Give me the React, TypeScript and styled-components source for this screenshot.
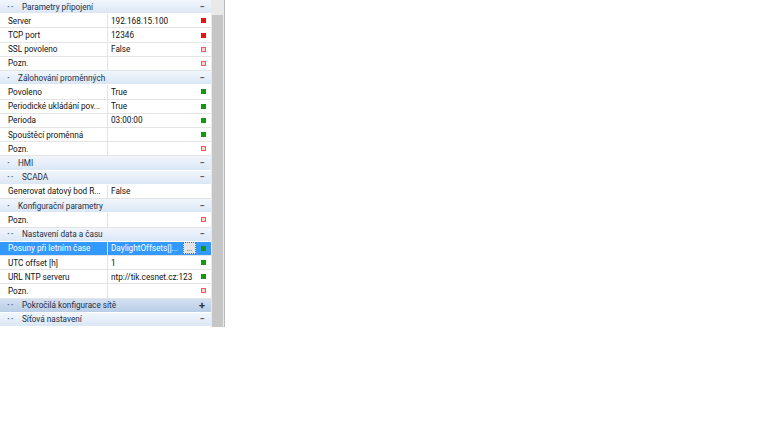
import React from 'react'
import styled, { createGlobalStyle } from 'styled-components'

const GlobalStyle = createGlobalStyle`
  html, body {
    margin: 0;
    padding: 0;
    background: #ffffff;
  }
  body {
    font-family: Roboto, "Liberation Sans", Arial, sans-serif;
    font-size: 8.2px;
    color: #111111;
  }
`

const Panel = styled.div`
  width: 225px;
  height: 327px;
  display: flex;
  border-right: 1px solid #b9b9b9;
  box-sizing: border-box;
  overflow: hidden;
`

const Grid = styled.div`
  flex: 1;
  display: flex;
  flex-direction: column;
  min-width: 0;
`

const Scrollbar = styled.div`
  width: 13px;
  background: #e9e9e9;
  display: flex;
  flex-direction: column;
  padding: 15px 1px 0;
  box-sizing: border-box;
`

const Thumb = styled.div`
  flex: 1;
  background: #c6c6c6;
`

const CategoryRow = styled.div<{ $dark?: boolean }>`
  height: 14.25px;
  display: flex;
  align-items: center;
  background: ${p =>
    p.$dark
      ? 'linear-gradient(#d3e0f1, #b9cde7)'
      : 'linear-gradient(#f1f6fc, #dbe7f6)'};
  color: #1e2f46;
  border-bottom: 1px solid #ffffff;
  box-sizing: border-box;
  padding-left: 7px;
`

const Dots = styled.span<{ $level: number }>`
  width: ${p => (p.$level === 2 ? 15 : 11)}px;
  color: #5f6f86;
  font-size: 9px;
  font-weight: bold;
  letter-spacing: 1px;
  flex-shrink: 0;
`

const CategoryName = styled.span`
  flex: 1;
  white-space: nowrap;
`

const Toggle = styled.span<{ $plus?: boolean }>`
  width: 14px;
  text-align: center;
  color: ${p => (p.$plus ? '#333' : '#555')};
  font-size: ${p => (p.$plus ? 11 : 9)}px;
  font-weight: bold;
  margin-right: 2px;
`

const Row = styled.div<{ $selected?: boolean }>`
  height: 14.25px;
  display: flex;
  align-items: stretch;
  background: ${p => (p.$selected ? '#3399ff' : '#ffffff')};
  color: ${p => (p.$selected ? '#ffffff' : '#111111')};
  border-bottom: 1px solid #e4e4e4;
  box-sizing: border-box;
`

const NameCell = styled.div`
  width: 108px;
  padding-left: 8px;
  box-sizing: border-box;
  border-right: 1px solid #e4e4e4;
  display: flex;
  align-items: center;
  white-space: nowrap;
  overflow: hidden;
`

const ValueCell = styled.div`
  flex: 1;
  padding-left: 3px;
  display: flex;
  align-items: center;
  white-space: nowrap;
  overflow: hidden;
  min-width: 0;
`

const ValueText = styled.span`
  flex: 1;
  overflow: hidden;
`

const EllipsisButton = styled.span`
  width: 13px;
  height: 12px;
  margin: 0 2px 0 4px;
  flex-shrink: 0;
  background: #e4e4e4;
  border: 1px dotted #6e6e6e;
  box-sizing: border-box;
  color: #333;
  font-size: 7px;
  line-height: 12px;
  text-align: center;
`

const Marker = styled.span<{ $kind: 'red' | 'pink' | 'green' }>`
  width: 5px;
  height: 5px;
  margin: 0 5px 0 3px;
  flex-shrink: 0;
  box-sizing: border-box;
  background: ${p =>
    p.$kind === 'red' ? '#ee1111' : p.$kind === 'green' ? '#119911' : '#fbd0d0'};
  border: ${p => (p.$kind === 'pink' ? '1px solid #ef5a5a' : 'none')};
`

type Item =
  | { type: 'cat'; name: string; level: number; open?: boolean; dark?: boolean }
  | { type: 'prop'; name: string; value?: string; marker?: 'red' | 'pink' | 'green'; selected?: boolean; button?: boolean }

const items: Item[] = [
  { type: 'cat', name: 'Parametry připojení', level: 2 },
  { type: 'prop', name: 'Server', value: '192.168.15.100', marker: 'red' },
  { type: 'prop', name: 'TCP port', value: '12346', marker: 'red' },
  { type: 'prop', name: 'SSL povoleno', value: 'False', marker: 'pink' },
  { type: 'prop', name: 'Pozn.', marker: 'pink' },
  { type: 'cat', name: 'Zálohování proměnných', level: 1 },
  { type: 'prop', name: 'Povoleno', value: 'True', marker: 'green' },
  { type: 'prop', name: 'Periodické ukládání pov...', value: 'True', marker: 'green' },
  { type: 'prop', name: 'Perioda', value: '03:00:00', marker: 'green' },
  { type: 'prop', name: 'Spouštěcí proměnná', marker: 'green' },
  { type: 'prop', name: 'Pozn.', marker: 'pink' },
  { type: 'cat', name: 'HMI', level: 1 },
  { type: 'cat', name: 'SCADA', level: 2 },
  { type: 'prop', name: 'Generovat datový bod R...', value: 'False' },
  { type: 'cat', name: 'Konfigurační parametry', level: 1 },
  { type: 'prop', name: 'Pozn.', marker: 'pink' },
  { type: 'cat', name: 'Nastavení data a času', level: 2 },
  { type: 'prop', name: 'Posuny při letním čase', value: 'DaylightOffsets[]...', marker: 'green', selected: true, button: true },
  { type: 'prop', name: 'UTC offset [h]', value: '1', marker: 'green' },
  { type: 'prop', name: 'URL NTP serveru', value: 'ntp://tik.cesnet.cz:123', marker: 'green' },
  { type: 'prop', name: 'Pozn.', marker: 'pink' },
  { type: 'cat', name: 'Pokročilá konfigurace sítě', level: 2, open: false, dark: true },
  { type: 'cat', name: 'Síťová nastavení', level: 2 },
]

const App = () => (
  <>
    <GlobalStyle />
    <Panel>
      <Grid>
        {items.map((it, i) =>
          it.type === 'cat' ? (
            <CategoryRow key={i} $dark={it.dark}>
              <Dots $level={it.level}>{it.level === 2 ? '··' : '·'}</Dots>
              <CategoryName>{it.name}</CategoryName>
              <Toggle $plus={it.open === false}>{it.open === false ? '+' : '−'}</Toggle>
            </CategoryRow>
          ) : (
            <Row key={i} $selected={it.selected}>
              <NameCell>{it.name}</NameCell>
              <ValueCell>
                <ValueText>{it.value}</ValueText>
                {it.button && <EllipsisButton>...</EllipsisButton>}
                {it.marker ? <Marker $kind={it.marker} /> : null}
              </ValueCell>
            </Row>
          )
        )}
      </Grid>
      <Scrollbar>
        <Thumb />
      </Scrollbar>
    </Panel>
  </>
)

export default App
